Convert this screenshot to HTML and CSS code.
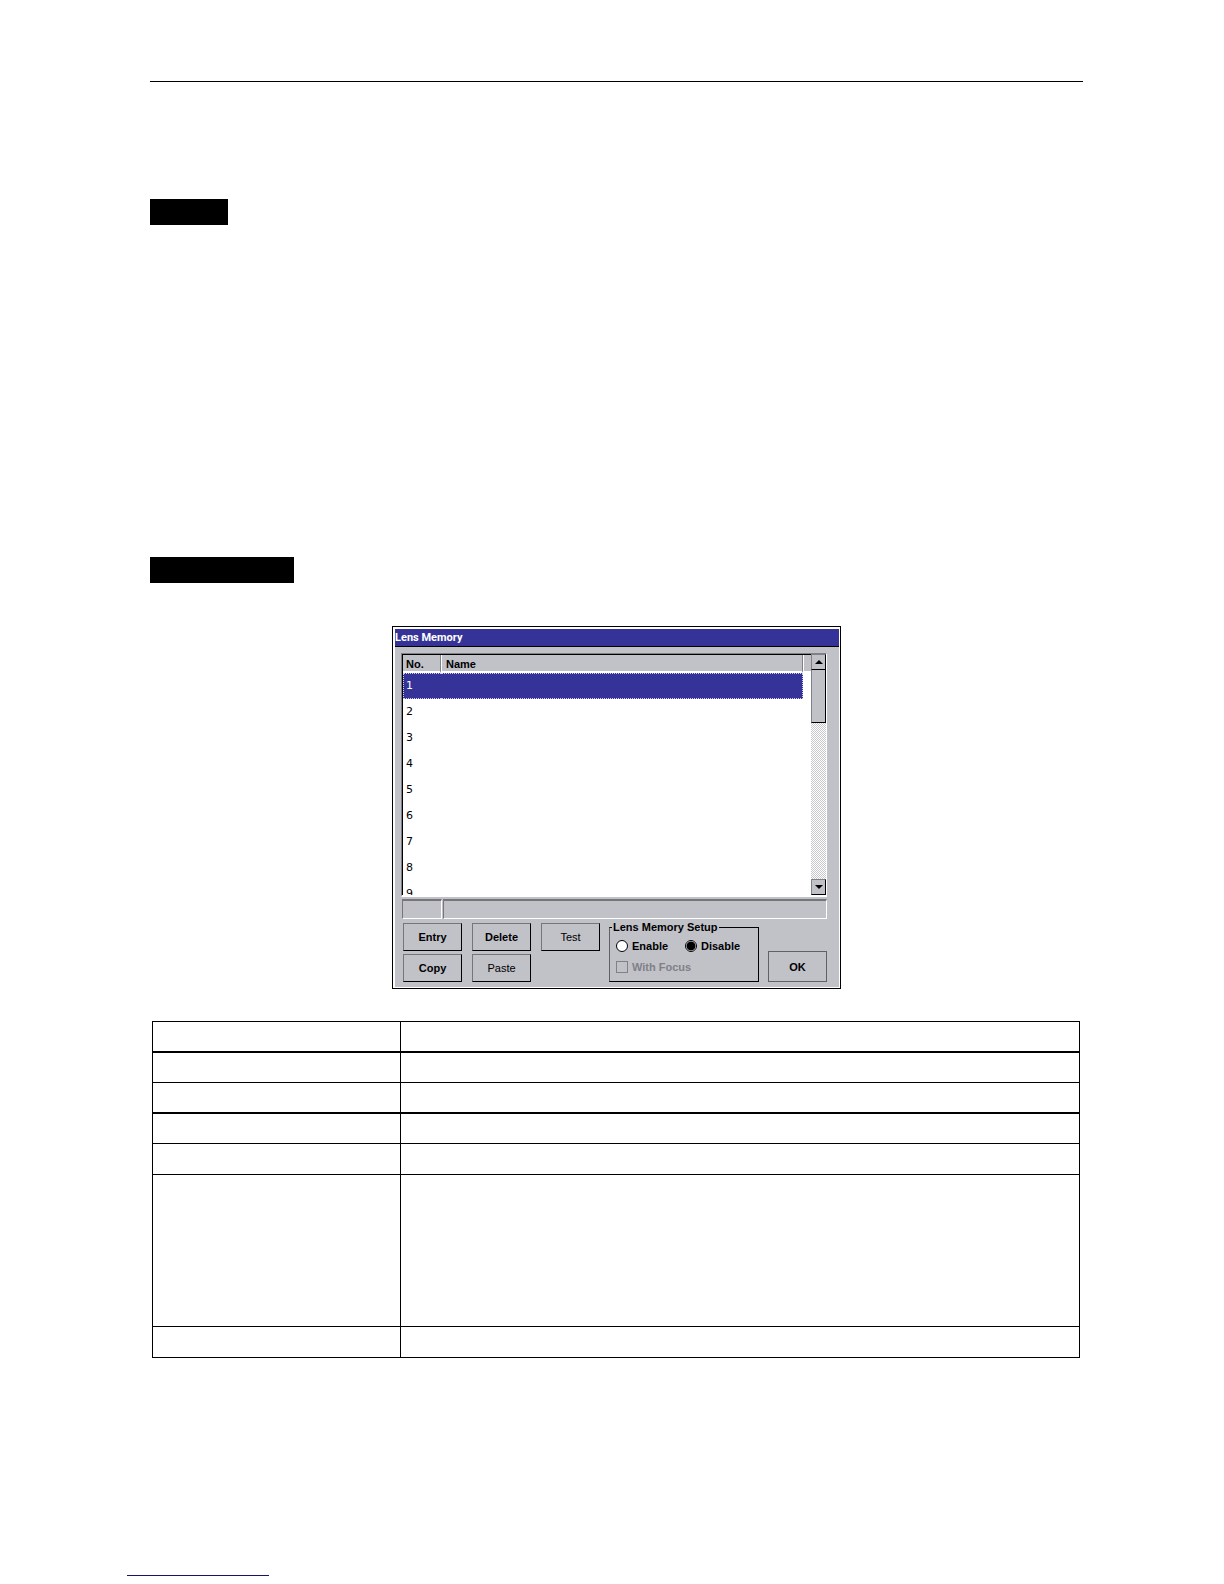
FILE: index.html
```html
<!DOCTYPE html>
<html lang="en">
<head>
  <meta charset="UTF-8">
  <meta name="viewport" content="width=device-width, initial-scale=1.0">
  <title>Lens Memory</title>
  <link rel="stylesheet" href="styles.css">
</head>
<body>
  <main class="page">
    <hr class="rule">
    <section class="intro">
      <div class="label"></div>
    </section>
    <section class="screen">
      <div class="label wide"></div>
      <form class="dialog">
        <h1 class="title">Lens Memory</h1>
        <div class="content">
          <div class="list">
            <div class="view">
              <table class="memory">
                <thead>
                  <tr><th class="no">No.</th><th>Name</th><th class="end"></th></tr>
                </thead>
                <tbody>
                  <tr class="selected"><td>1</td><td></td></tr>
                  <tr><td>2</td><td></td></tr>
                  <tr><td>3</td><td></td></tr>
                  <tr><td>4</td><td></td></tr>
                  <tr><td>5</td><td></td></tr>
                  <tr><td>6</td><td></td></tr>
                  <tr><td>7</td><td></td></tr>
                  <tr><td>8</td><td></td></tr>
                  <tr><td>9</td><td></td></tr>
                </tbody>
              </table>
            </div>
            <div class="scrollbar">
              <button type="button" class="arrow"><svg width="8" height="4" viewBox="0 0 8 4"><path d="M4 0L8 4H0z"/></svg></button>
              <div class="thumb"></div>
              <button type="button" class="arrow down"><svg width="8" height="4" viewBox="0 0 8 4"><path d="M0 0H8L4 4z"/></svg></button>
            </div>
          </div>
          <div class="status">
            <div></div>
            <div></div>
          </div>
          <div class="controls">
            <div class="buttons">
              <button type="button">Entry</button>
              <button type="button">Delete</button>
              <button type="button" class="light">Test</button>
              <button type="button">Copy</button>
              <button type="button" class="light">Paste</button>
            </div>
            <fieldset class="setup">
              <legend>Lens Memory Setup</legend>
              <div class="options">
                <label><input type="radio" name="setup">Enable</label>
                <label><input type="radio" name="setup" checked>Disable</label>
              </div>
              <label class="disabled"><input type="checkbox" disabled>With Focus</label>
            </fieldset>
            <button type="submit" class="ok">OK</button>
          </div>
        </div>
      </form>
      <table class="desc">
        <tr class="thick"><td></td><td></td></tr>
        <tr><td></td><td></td></tr>
        <tr class="thick"><td></td><td></td></tr>
        <tr><td></td><td></td></tr>
        <tr class="last"><td></td><td></td></tr>
        <tr class="tall"><td></td><td></td></tr>
        <tr class="last"><td></td><td></td></tr>
      </table>
    </section>
  </main>
  <footer class="footer">
    <hr class="underline">
  </footer>
</body>
</html>
```
FILE: styles.css
```css
* {
  box-sizing: border-box;
}
body {
  margin: 0;
  min-height: 100vh;
  display: flex;
  flex-direction: column;
  background: #fff;
  color: #000;
  font-family: "Liberation Sans", Arial, sans-serif;
  font-size: 11px;
  line-height: 14px;
}
.page {
  flex: 1;
  padding: 81px 141px 0 150px;
}
.rule {
  margin: 0;
  border: 0;
  border-top: 1px solid #000;
}
.intro {
  padding-top: 117px;
  min-height: 475px;
}
.label {
  width: 78px;
  height: 26px;
  background: #000;
}
.label.wide {
  width: 144px;
}

/* dialog */
.dialog {
  width: 449px;
  margin: 43px auto 32px;
  border: 1px solid #000;
  padding: 2px 1px 1px 2px;
  background: #fff;
}
.title {
  margin: 0;
  height: 18px;
  border-bottom: 1px solid #000;
  background: #363398;
  color: #fff;
  font: bold 11px/18px Roboto, sans-serif;
}
.content {
  padding: 6px 12px 5px 6px;
  background: #c1c1c8;
}

/* list */
.list {
  display: flex;
  height: 244px;
  border: 1px solid #808086;
  border-right-color: #fff;
  border-bottom: 2px solid #fff;
  background: #fff;
}
.view {
  flex: 1;
  overflow: hidden;
  border-top: 1px solid #000;
  border-left: 1px solid #000;
}
.memory {
  width: 100%;
  table-layout: fixed;
  border-collapse: separate;
  border-spacing: 0;
}
.memory th {
  height: 18px;
  padding: 2px 0 0 4px;
  border-right: 1px solid #808086;
  border-bottom: 2px solid #fff;
  border-left: 1px solid #fff;
  background: #c1c1c8;
  text-align: left;
  line-height: 14px;
}
.memory .no {
  width: 38px;
  padding-left: 3px;
  border-left: 0;
}
.memory .end {
  width: 8px;
  padding: 0;
  border-right: 0;
}
.memory td {
  height: 26px;
  padding: 0 0 0 3px;
  font: 11px/14px "DejaVu Sans", sans-serif;
}
.memory .selected td {
  padding: 0;
  border: 1px dotted #d0d0f0;
  background: #363398;
  color: #fff;
}
.memory .selected td:first-child {
  padding-left: 2px;
  border-right: 0;
}
.memory .selected td:last-child {
  border-left: 0;
}
.scrollbar {
  display: flex;
  flex-direction: column;
  width: 15px;
  background: repeating-conic-gradient(#c8c8cc 0 25%, #fff 0 50%) 0 0 / 2px 2px;
}
.arrow,
.thumb {
  width: 15px;
  height: 16px;
  padding: 0;
  border: 1px solid #808086;
  border-right: 1px solid #000;
  border-bottom: 1px solid #000;
  background: #c1c1c8;
}
.arrow svg {
  display: block;
  margin: auto;
}
.thumb {
  height: 53px;
  border-top: 0;
}
.arrow.down {
  margin-top: auto;
}

/* status bar */
.status {
  display: grid;
  grid-template-columns: 40px 1fr;
  gap: 1px;
  margin: 2px 0 0 1px;
}
.status div {
  height: 20px;
  border: 1px solid #fff;
  border-top: 2px solid #75757b;
  border-left: 1px solid #75757b;
}

/* buttons */
.controls {
  display: flex;
  align-items: flex-end;
  padding: 1px 0 0 2px;
}
.buttons {
  display: grid;
  grid-template-columns: repeat(3, 59px);
  gap: 3px 10px;
  margin-right: 9px;
}
.controls button {
  height: 28px;
  padding: 0;
  border: 1px solid #75757b;
  border-right: 1px solid #000;
  border-bottom: 1px solid #000;
  background: #c1c1c8;
  color: #000;
  font: bold 11px/14px "Liberation Sans", Arial, sans-serif;
}
.controls .light {
  font-weight: normal;
}
.controls .ok {
  width: 59px;
  height: 31px;
  margin-left: auto;
  border-color: #606066;
}
.setup {
  width: 150px;
  height: 62px;
  margin: 0;
  padding: 5px 0 0 6px;
  border: 1px solid #000;
  border-left-color: #606066;
  font-weight: bold;
}
.setup legend {
  margin-left: -4px;
  padding: 0 1px;
  line-height: 14px;
}
.options {
  display: grid;
  grid-template-columns: 69px 1fr;
  margin-bottom: 7px;
}
.setup label {
  display: flex;
  align-items: center;
  gap: 4px;
}
.setup input {
  appearance: none;
  width: 12px;
  height: 12px;
  margin: 0;
  border: 1px solid #000;
  background: #fff;
}
.setup input[type="radio"] {
  border-radius: 50%;
}
.setup input:checked {
  background: radial-gradient(#000 0 4px, #fff 5px);
}
.setup .disabled {
  color: #808086;
}
.setup input:disabled {
  border-color: #808086;
  background: #c1c1c8;
}

/* description table */
.desc {
  width: calc(100% - 5px);
  margin-left: 2px;
  table-layout: fixed;
  border-spacing: 0;
  border-top: 1px solid #000;
  border-left: 1px solid #000;
}
.desc td {
  height: 30px;
  padding: 0;
  border-right: 1px solid #000;
  border-bottom: 1px solid #000;
}
.desc td:first-child {
  width: 248px;
}
.desc .thick td {
  height: 31px;
  border-bottom-width: 2px;
}
.desc .last td {
  height: 31px;
}
.desc .tall td {
  height: 152px;
}

.footer {
  padding: 0 127px 8px;
}
.underline {
  width: 142px;
  margin: 0;
  border: 0;
  border-top: 1px solid #14146e;
}
```
